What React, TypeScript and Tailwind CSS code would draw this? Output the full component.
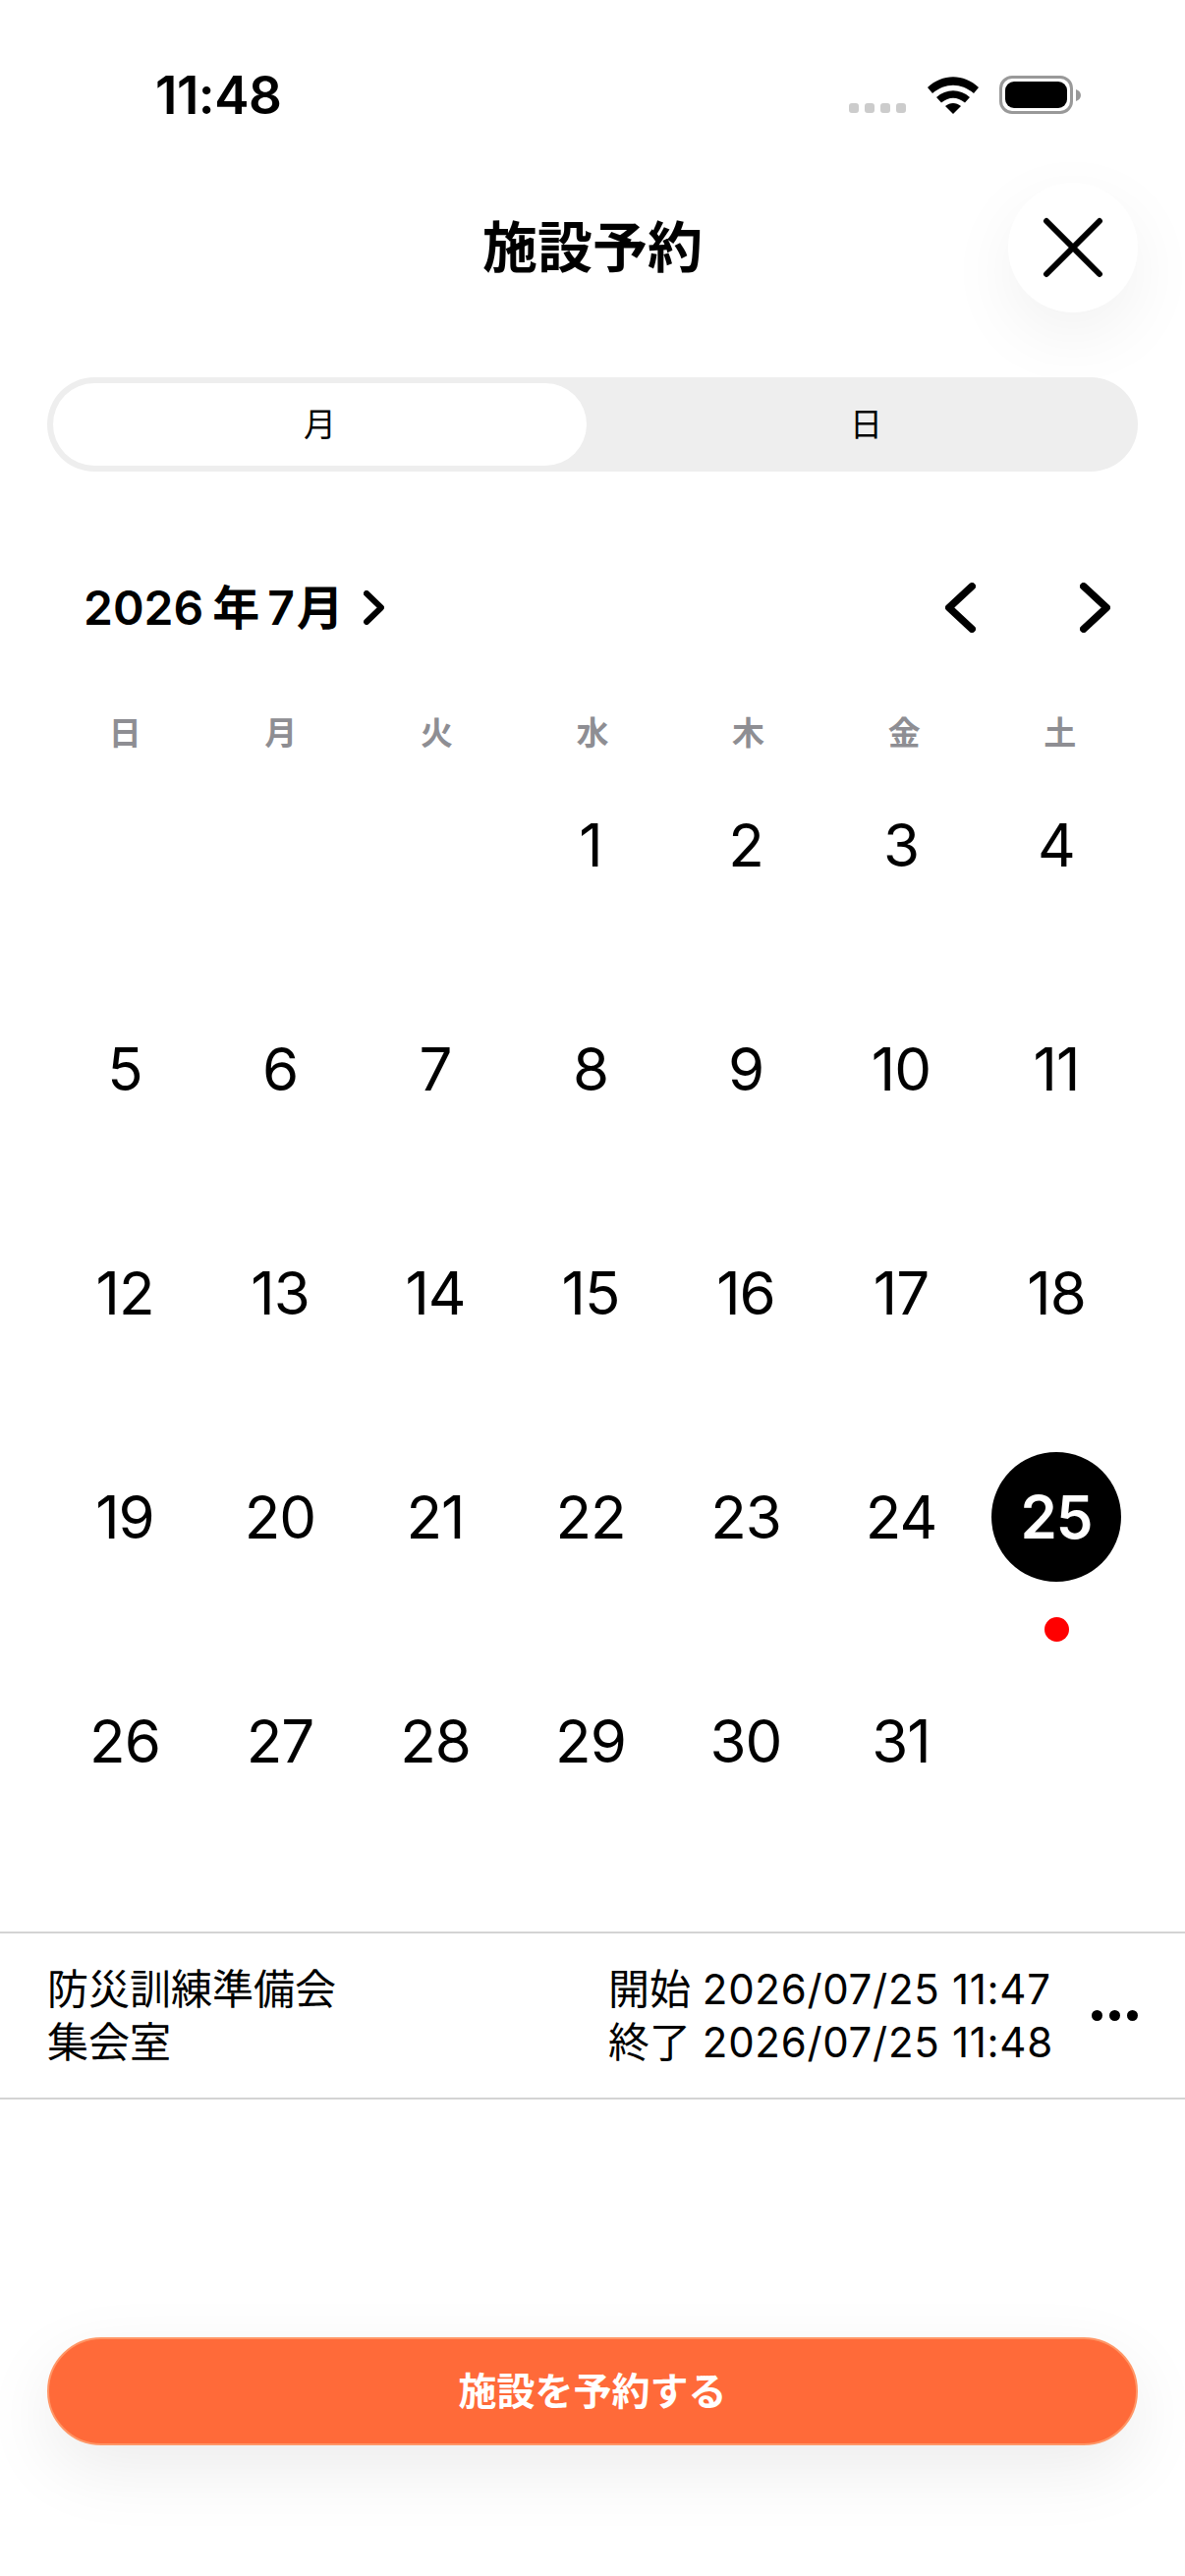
const font = { fontFamily: '"Inter", "Noto Sans CJK JP", sans-serif' };
const weekdays = ["日", "月", "火", "水", "木", "金", "土"];
const days: (number | null)[] = [null, null, null, ...Array.from({ length: 31 }, (_, i) => i + 1)];

function NavChevron({ dir }: { dir: "l" | "r" }) {
  return (
    <svg width="31" height="51" viewBox="0 0 31 51" fill="none" stroke="#000" strokeWidth="7.5" strokeLinecap="round" strokeLinejoin="round">
      <path d={dir === "l" ? "M27.2 3.8 L3.8 25.5 L27.2 47.2" : "M3.8 3.8 L27.2 25.5 L3.8 47.2"} />
    </svg>
  );
}

function StatusIcons() {
  return (
    <div className="flex items-end">
      <div className="flex gap-[6px] mb-[1px] mr-[22px]">
        {[0, 1, 2, 3].map((i) => (
          <div key={i} className="w-[10px] h-[10px] rounded-[3px] bg-[#cccccc]" />
        ))}
      </div>
      <svg width="52" height="38" viewBox="0 0 52 38" className="mr-[21px]">
        <path d="M0 11 C 15 -3.5, 37 -3.5, 52 11 L47 17 C 34 6, 18 6, 5 17 Z" fill="#000" />
        <path d="M9 21 C 19 12, 33 12, 43 21 L38 26.5 C 30 20, 22 20, 14 26.5 Z" fill="#000" />
        <path d="M18 30 C 23 26, 29 26, 34 30 L26 38 Z" fill="#000" />
      </svg>
      <div className="flex items-center">
        <div className="w-[75px] h-[39px] rounded-[13px] border-[3px] border-[#999999] p-[3px] bg-white">
          <div className="w-full h-full rounded-[9px] bg-black" />
        </div>
        <svg width="5" height="12" viewBox="0 0 5 12" className="ml-[3px]">
          <path d="M0 0 C 3 1, 5 3, 5 6 C 5 9, 3 11, 0 12 Z" fill="#999999" />
        </svg>
      </div>
    </div>
  );
}

export default function App() {
  return (
    <div style={font} className="w-[1206px] h-[2622px] bg-white flex flex-col overflow-hidden text-black">
      <div className="h-[186px] shrink-0 flex justify-between items-start pt-[77px] pl-[158px] pr-[106px]">
        <span className="text-[53px] leading-[40px] font-semibold tracking-[-0.5px]">11:48</span>
        <StatusIcons />
      </div>

      <div className="h-[132px] shrink-0 px-[48px] grid grid-cols-[132px_1fr_132px] items-center">
        <div />
        <div className="text-center text-[56px] font-bold leading-none">施設予約</div>
        <div className="w-[132px] h-[132px] rounded-full bg-white flex items-center justify-center shadow-[0_24px_72px_rgba(0,0,0,0.06)]">
          <svg width="66" height="66" viewBox="0 0 66 66" fill="none" stroke="#000" strokeWidth="6" strokeLinecap="round">
            <path d="M6 6 L60 60 M60 6 L6 60" />
          </svg>
        </div>
      </div>

      <div className="mt-[66px] mx-[48px] h-[96px] shrink-0 rounded-full bg-[#eeeeee] p-[6px] flex">
        <div className="w-[543px] pt-[2px] rounded-full bg-white flex items-center justify-center text-[33px]">月</div>
        <div className="flex-1 flex items-center justify-center pt-[2px] pl-[14px] text-[33px]">日</div>
      </div>

      <div className="mt-[103px] h-[72px] shrink-0 flex items-center pl-[85px] pr-[76px]">
        <span className="text-[48px] font-semibold leading-none flex items-center">
          <span>2026</span><span className="ml-[9px]">年</span><span className="ml-[8px]">7</span><span className="ml-[2px]">月</span>
        </span>
        <svg width="21" height="35" viewBox="0 0 21 35" fill="none" stroke="#000" strokeWidth="6" strokeLinecap="round" strokeLinejoin="round" className="ml-[20px] -mt-[2px]">
          <path d="M3 3 L18 17.5 L3 32" />
        </svg>
        <span className="ml-auto flex -mt-[2px]"><NavChevron dir="l" /></span>
        <span className="ml-[106px] flex -mt-[2px]"><NavChevron dir="r" /></span>
      </div>

      <div className="mt-[67px] px-[48px] grid grid-cols-7 h-[48px] shrink-0">
        {weekdays.map((d) => (
          <div key={d} className="flex items-center justify-center text-[33px] font-semibold text-[#8e8e93]">{d}</div>
        ))}
      </div>

      <div className="mt-[24px] pl-[48px] pr-[52px] grid grid-cols-7 auto-rows-[228px] shrink-0">
        {days.map((d, i) => (
          <div key={i} className="flex flex-col items-center">
            {d !== null && (
              <div className={d === 25
                ? "w-[132px] h-[132px] rounded-full bg-black text-white font-semibold flex items-center justify-center text-[60px] tracking-[-1px]"
                : "w-[132px] h-[132px] flex items-center justify-center text-[60px] tracking-[-1px]"}>{d}</div>
            )}
            {d === 25 && <div className="mt-[36px] w-[25px] h-[25px] rounded-full bg-[#ff0000]" />}
          </div>
        ))}
      </div>

      <div className="mt-[32px] h-[171px] shrink-0 border-y-[2px] border-[#d4d4d4] pl-[48px] pr-[48px] flex items-center text-[42px] leading-[54px]">
        <div className="w-[571px]">
          <div>防災訓練準備会</div>
          <div>集会室</div>
        </div>
        <div className="flex-1">
          <div>開始 <span className="tracking-[0.7px]">2026/07/25 11:47</span></div>
          <div>終了 <span className="tracking-[0.7px]">2026/07/25 11:48</span></div>
        </div>
        <div className="flex gap-[7px]">
          {[0, 1, 2].map((i) => (
            <div key={i} className="w-[11px] h-[11px] rounded-full bg-black" />
          ))}
        </div>
      </div>

      <div className="flex-1" />

      <div className="mx-[48px] mb-[133px] h-[110px] shrink-0 rounded-full bg-[#ff6a39] border-[2px] border-[#ff9666] flex items-center justify-center text-white text-[39px] font-bold shadow-[0_24px_72px_rgba(0,0,0,0.08)]">
        施設を予約する
      </div>
    </div>
  );
}
